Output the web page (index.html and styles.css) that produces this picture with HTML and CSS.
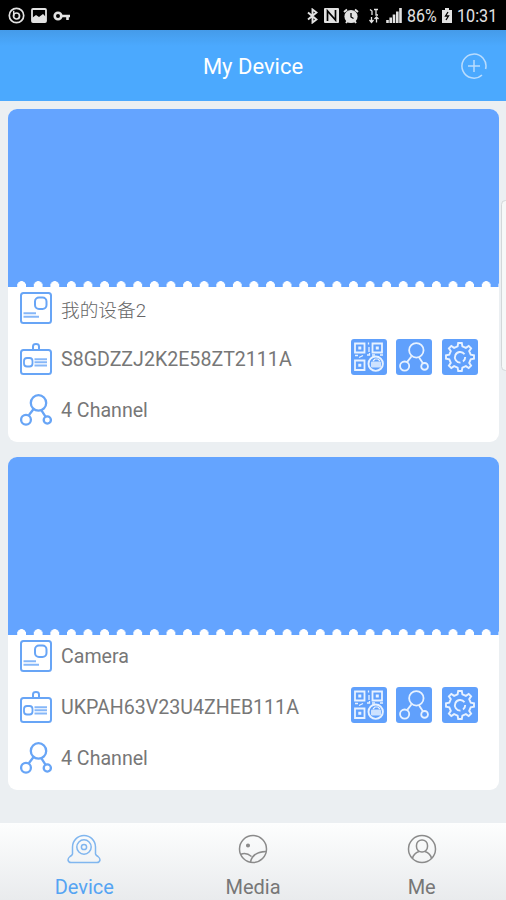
FILE: index.html
```html
<!DOCTYPE html>
<html lang="en">
    <head>
        <meta charset="UTF-8" />
        <meta name="viewport" content="width=device-width, initial-scale=1.0" />
        <title>My Device</title>
        <link rel="stylesheet" href="styles.css">
    </head>

    <body>
        <!-- Shared icons -->
        <svg class="sprite" width="0" height="0">
            <symbol id="icon-name" viewBox="0 0 32 32">
                <rect x="1" y="1" width="30" height="30" rx="2.5" stroke-width="2" />
                <rect x="15" y="5.5" width="11.5" height="11.5" rx="4" stroke-width="2" />
                <path d="M3.5 21.2H16M3.5 24.8H19" stroke-width="2" opacity="0.8" />
            </symbol>
            <symbol id="icon-id" viewBox="0 0 32 32">
                <rect x="1" y="7" width="30" height="24" rx="2.5" stroke-width="2" />
                <path d="M13 7V3.4Q13 1 16 1T19 3.4V7" stroke-width="2" />
                <rect x="4" y="15" width="8.5" height="8.5" rx="3" stroke-width="1.8" />
                <path d="M14.5 16.2H27M14.5 19.3H27M14.5 22.4H27" stroke-width="2" opacity="0.8" />
            </symbol>
            <symbol id="icon-share" viewBox="0 0 32 32">
                <circle cx="18.5" cy="8.9" r="7.7" />
                <circle cx="6" cy="25.7" r="4.9" />
                <circle cx="27.3" cy="26" r="3.6" />
                <path d="M8.8 21.2L13.4 15.2M21.3 16.2L25.5 22.7" />
            </symbol>
            <symbol id="icon-qr" viewBox="0 0 36 36">
                <path d="M4 4.5h9.5v9H4zM21.5 4.5H31v9h-9.5zM4 21.5h9.5V31H4z" stroke-width="1.8" />
                <path d="M7.3 7.5h3v3h-3zM24.8 7.5h3v3h-3zM7.3 24.8h3v3h-3z" fill="currentColor" stroke="none" />
                <path d="M17.5 3.5v2M18 8v5M16 16h2.5v-2M4 16.5h3M8 18.5l4-2M21 16h3M29 16h3" stroke-width="1.3" />
                <circle cx="24.7" cy="24.7" r="7.2" stroke-width="1.9" />
                <rect x="20" y="22.5" width="10" height="6" rx="1" fill="currentColor" stroke="none" opacity="0.8" />
                <path d="M22 22l2-2h3l2 2" stroke-width="1.2" />
            </symbol>
            <symbol id="icon-gear" viewBox="0 0 36 36">
                <path d="M15.6 7.3L16.2 4H19.8L20.4 7.3L23.9 8.8L26.7 6.9L29.1 9.3L27.2 12.1L28.7 15.6L32 16.2V19.8L28.7 20.4L27.2 23.9L29.1 26.7L26.7 29.1L23.9 27.2L20.4 28.7L19.8 32H16.2L15.6 28.7L12.1 27.2L9.3 29.1L6.9 26.7L8.8 23.9L7.3 20.4L4 19.8V16.2L7.3 15.6L8.8 12.1L6.9 9.3L9.3 6.9L12.1 8.8Z" />
                <path d="M22.5 15.2A5.3 5.3 0 1 0 18.5 23.6M23.2 18A5.3 5.3 0 0 1 21 22.4" />
            </symbol>
        </svg>

        <div class="status">
            <div class="status__left">
                <svg width="17" height="17" viewBox="0 0 17 17">
                    <circle cx="8.5" cy="8.5" r="7.2" stroke-width="1.7" />
                    <circle cx="8.5" cy="9" r="3" stroke-width="1.7" />
                    <path d="M5.7 3.8V9" stroke-width="1.5" />
                </svg>
                <svg width="16" height="15" viewBox="0 0 16 15">
                    <rect x="1" y="1" width="14" height="13" rx="1" stroke-width="1.8" />
                    <path d="M1 10L5 7L8 9L12 6L15 9V14H1Z" fill="currentColor" stroke="none" />
                </svg>
                <svg width="18" height="12" viewBox="0 0 18 12">
                    <circle cx="5" cy="6" r="3.3" stroke-width="2.6" />
                    <path d="M8 6H17M14.5 6V10" stroke-width="2.6" />
                </svg>
            </div>
            <div class="status__right">
                <svg width="11" height="16" viewBox="0 0 11 16">
                    <path d="M1 4.5L9.5 11.5L5.5 14.5V1.5L9.5 4.5L1 11.5" stroke-width="1.9" />
                </svg>
                <svg class="status__nfc" width="15" height="15" viewBox="0 0 15 15">
                    <rect width="15" height="15" rx="1" fill="currentColor" stroke="none" />
                    <path d="M3.5 13V3L11.5 12V2" stroke="#000" stroke-width="1.7" />
                </svg>
                <svg class="status__alarm" width="16" height="16" viewBox="0 0 16 16">
                    <circle cx="8" cy="8.5" r="6.6" fill="currentColor" stroke="none" />
                    <path d="M1 4L4 1.5M15 4L12 1.5M3 15l1.5-2M13 15l-1.5-2" stroke-width="2" />
                    <path d="M8 5V9L10.5 10.5" stroke="#000" stroke-width="1.3" />
                </svg>
                <svg class="status__lte" width="10" height="16" viewBox="0 0 10 16">
                    <path d="M1 1.5L3 3V7M5 1.5H9M7 1.5V7H9M2.5 9V14M.5 12L2.5 14.5L4.5 12M7.5 14.5V9M5.5 11L7.5 9L9.5 11" stroke-width="1.3" />
                </svg>
                <svg class="status__signal" width="16" height="15" viewBox="0 0 16 15">
                    <path d="M1.5 15V12M4.7 15V9.5M8 15V6.5M11.3 15V3.5M14.5 15V0" stroke-width="2.6" />
                </svg>
                <span class="status__percent">86%</span>
                <svg class="status__battery" width="10" height="15" viewBox="0 0 10 15">
                    <path d="M3 0H7V2H10V15H0V2H3Z" fill="currentColor" stroke="none" />
                    <path d="M6 4L3.5 8H6.5L4 12" stroke="#000" stroke-width="1.3" />
                </svg>
                <span class="status__time">10:31</span>
            </div>
        </div>

        <header class="header">
            <h1>My Device</h1>
            <button class="header__add" aria-label="Add">
                <svg width="26" height="26" viewBox="0 0 26 26">
                    <path d="M21 22A12 12 0 1 1 24.6 16M13 7V19M7 13H19" />
                </svg>
            </button>
        </header>

        <main class="devices">
            <section class="card">
                <div class="card__preview"></div>
                <div class="card__info">
                    <div class="row">
                        <svg class="row__icon"><use href="#icon-name" /></svg>
                        <span class="row__text row__text--cjk" lang="zh">我的设备2</span>
                    </div>
                    <div class="row">
                        <svg class="row__icon"><use href="#icon-id" /></svg>
                        <span class="row__text">S8GDZZJ2K2E58ZT2111A</span>
                        <div class="actions">
                            <button><svg width="36" height="36"><use href="#icon-qr" /></svg></button>
                            <button><svg width="30" height="30"><use href="#icon-share" /></svg></button>
                            <button><svg width="36" height="36"><use href="#icon-gear" /></svg></button>
                        </div>
                    </div>
                    <div class="row">
                        <svg class="row__icon"><use href="#icon-share" /></svg>
                        <span class="row__text">4 Channel</span>
                    </div>
                </div>
            </section>

            <section class="card">
                <div class="card__preview"></div>
                <div class="card__info">
                    <div class="row">
                        <svg class="row__icon"><use href="#icon-name" /></svg>
                        <span class="row__text">Camera</span>
                    </div>
                    <div class="row">
                        <svg class="row__icon"><use href="#icon-id" /></svg>
                        <span class="row__text">UKPAH63V23U4ZHEB111A</span>
                        <div class="actions">
                            <button><svg width="36" height="36"><use href="#icon-qr" /></svg></button>
                            <button><svg width="30" height="30"><use href="#icon-share" /></svg></button>
                            <button><svg width="36" height="36"><use href="#icon-gear" /></svg></button>
                        </div>
                    </div>
                    <div class="row">
                        <svg class="row__icon"><use href="#icon-share" /></svg>
                        <span class="row__text">4 Channel</span>
                    </div>
                </div>
            </section>
        </main>

        <nav class="tabs">
            <a class="tab tab--active">
                <svg width="34" height="30" viewBox="0 0 34 30">
                    <path d="M5.5 20V13A11.5 11.5 0 0 1 28.5 13V20Q29 21.5 31 22.5Q33 24 33 26Q32.5 28.5 30 28.5H4Q1.5 28.5 1 26Q1 24 3 22.5Q5 21.5 5.5 20Z" />
                    <circle cx="17" cy="13" r="7.2" />
                    <circle cx="17" cy="13" r="2.6" />
                </svg>
                <span>Device</span>
            </a>
            <a class="tab">
                <svg width="34" height="30" viewBox="0 0 34 30">
                    <circle cx="17" cy="15" r="13.5" />
                    <circle cx="12" cy="11.5" r="1.3" fill="currentColor" />
                    <path d="M4.5 20.5Q10 17.8 15.5 22.5M14.5 28Q16.5 18 30 17.5" />
                </svg>
                <span>Media</span>
            </a>
            <a class="tab">
                <svg width="34" height="30" viewBox="0 0 34 30">
                    <circle cx="17" cy="15" r="13.5" />
                    <rect x="11.5" y="6" width="11" height="12" rx="5.3" />
                    <path d="M14 17.5Q8.5 19.5 7.5 24.3M20 17.5Q25.5 19.5 26.5 24.3" />
                </svg>
                <span>Me</span>
            </a>
        </nav>

        <div class="edge-handle"></div>
    </body>
</html>
```

FILE: styles.css
```css
/* CSS Reset */
html {
    box-sizing: border-box;
    font-size: 16px;
}

*,
*:before,
*:after {
    box-sizing: inherit;
}

body,
h1 {
    margin: 0;
    padding: 0;
    font-weight: normal;
}

body {
    display: flex;
    flex-direction: column;
    height: 900px;
    overflow: hidden;
    position: relative;
    background: #ebeff2;
    color: #777;
    font-family: Roboto, "Noto Sans CJK SC", sans-serif;
}

button {
    padding: 0;
    border: 0;
    background: none;
    color: inherit;
}

svg {
    display: block;
    flex: none;
    fill: none;
    stroke: currentColor;
}

.sprite {
    position: absolute;
}

/* Status bar */
.status {
    display: flex;
    justify-content: space-between;
    height: 30px;
    padding: 1px 9px 0 8px;
    background: #000;
    color: #e2e2e2;
}

.status__left,
.status__right {
    display: flex;
    align-items: center;
}

.status__left {
    gap: 6px;
}

.status__nfc {
    margin-left: 6px;
}

.status__alarm {
    margin-left: 4px;
}

.status__lte {
    margin-left: 10px;
}

.status__signal {
    margin-left: 7px;
}

.status__percent,
.status__time {
    font-size: 19px;
    white-space: nowrap;
    transform-origin: left;
}

.status__percent {
    width: 31px;
    margin-left: 5px;
    transform: scaleX(0.84);
}

.status__battery {
    margin-left: 4px;
}

.status__time {
    width: 40px;
    margin-left: 5px;
    transform: scaleX(0.85);
}

/* Header */
.header {
    display: grid;
    grid-template-columns: 1fr auto 1fr;
    align-items: center;
    height: 71px;
    padding: 1px 19px 0;
    background: linear-gradient(#459be9, #4ba9fe 16px);
    color: #fff;
}

.header h1 {
    grid-column: 2;
    padding-top: 1px;
    font-size: 22px;
}

.header__add {
    justify-self: end;
    color: #b9dcfd;
}

.header__add svg {
    stroke-width: 1.5;
}

/* Devices */
.devices {
    flex: 1;
    display: flex;
    flex-direction: column;
    gap: 15px;
    padding: 8px 7px 0 8px;
}

.card {
    height: 333px;
    overflow: hidden;
    border-radius: 9px;
    background: #fff;
}

/* Perforated bottom edge, the first layer keeps the left end straight */
.card__preview {
    height: 178px;
    background:
        linear-gradient(#64a4ff, #64a4ff) 0 100% / 6px 8px no-repeat,
        radial-gradient(circle 4.6px at 50% 5.5px, #fff 88%, transparent) 5.3px 100% / 16.6px 7px repeat-x,
        #64a4ff;
}

.card__info {
    display: flex;
    flex-direction: column;
    gap: 19px;
    padding: 5px 21px 0 12px;
}

.row {
    display: flex;
    align-items: center;
    height: 32px;
}

.row__icon {
    width: 32px;
    height: 32px;
    margin-right: 9px;
    stroke: #68a5f6;
    stroke-width: 2.3;
}

.row__text {
    padding-top: 1px;
    font-size: 19.6px;
}

.row__text--cjk {
    padding-top: 0;
    font-size: 18.7px;
    font-weight: 300;
    color: #666;
}

.actions {
    display: flex;
    gap: 9px;
    margin: -4px 0 0 auto;
}

.actions button {
    display: flex;
    align-items: center;
    justify-content: center;
    width: 36px;
    height: 36px;
    border-radius: 3px;
    background: #60a0fc;
    color: #e8f2ff;
    stroke-width: 1.9;
}

.actions button:last-child {
    margin-left: 1px;
}

/* Bottom tabs */
.tabs {
    display: grid;
    grid-template-columns: repeat(3, 1fr);
    height: 77px;
    background: linear-gradient(#fdfefe, #e9ebed);
}

.tab {
    display: flex;
    flex-direction: column;
    align-items: center;
    gap: 10px;
    padding-top: 11px;
    font-size: 20px;
    line-height: 26px;
}

.tab svg {
    color: #8b8b8b;
    stroke-width: 1.5;
}

.tab--active {
    color: #55a4f3;
}

.tab--active svg {
    color: #80b6ef;
}

/* Handle of the edge panel, sits over the page */
.edge-handle {
    position: absolute;
    top: 200px;
    right: -4px;
    width: 9px;
    height: 171px;
    border: 1px solid #d3d7d9;
    border-radius: 5px;
    background: #f6f8f8;
}
```
